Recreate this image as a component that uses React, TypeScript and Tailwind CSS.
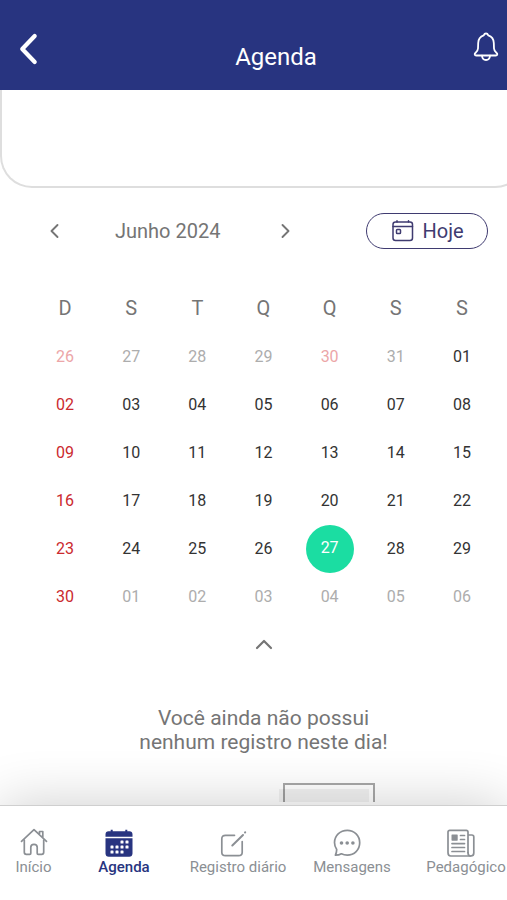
import type { ReactNode } from "react";

type Day = { label: string; kind: "muted" | "mutedRed" | "red" | "normal" | "selected" };

const weekdays = ["D", "S", "T", "Q", "Q", "S", "S"];

const dayStyles: Record<Day["kind"], string> = {
  muted: "text-[#adadad]",
  mutedRed: "text-[#eca6a8]",
  red: "text-[#cb2a2e]",
  normal: "text-[#333333]",
  selected: "bg-[#1bdda2] text-white pb-0.5",
};

const pad = (n: number) => String(n).padStart(2, "0");

const days: Day[] = [
  ...[26, 27, 28, 29, 30, 31].map(
    (n): Day => ({ label: pad(n), kind: n === 26 || n === 30 ? "mutedRed" : "muted" })
  ),
  ...Array.from({ length: 30 }, (_, i): Day => {
    const n = i + 1;
    return { label: pad(n), kind: n === 27 ? "selected" : n % 7 === 2 ? "red" : "normal" };
  }),
  ...[1, 2, 3, 4, 5, 6].map((n): Day => ({ label: pad(n), kind: "muted" })),
];

const weeks = Array.from({ length: 6 }, (_, i) => days.slice(i * 7, i * 7 + 7));

function Chevron({ d, className, width }: { d: string; className: string; width: number }) {
  return (
    <svg
      viewBox="0 0 24 24"
      className={className}
      fill="none"
      stroke="currentColor"
      strokeWidth={width}
      strokeLinecap="round"
      strokeLinejoin="round"
      aria-hidden="true"
    >
      <path d={d} />
    </svg>
  );
}

function BellIcon() {
  return (
    <svg viewBox="0 0 26 30" className="h-[30px] w-[26px]" fill="none" stroke="currentColor" strokeWidth="1.8" strokeLinecap="round" strokeLinejoin="round" aria-hidden="true">
      <path d="M13 1.500c-1.300 0-1.900.9-2.300 1.900C7.500 4.500 5.300 7.300 5.200 11l-.2 5.500c-.1 2-.9 3-2.400 4.200-1.500 1.300-1 2.800.6 2.800h19.600c1.600 0 2.100-1.500.6-2.800-1.500-1.200-2.300-2.200-2.400-4.200l-.2-5.500c-.1-3.700-2.300-6.500-5.500-7.600-.4-1-1-1.900-2.300-1.900Z" />
      <path d="M9 23.700c.2 2.600 1.800 4.300 4 4.300s3.800-1.700 4-4.300" />
    </svg>
  );
}

function TodayIcon() {
  return (
    <svg viewBox="0 0 22 22" className="size-[22px]" fill="none" stroke="currentColor" strokeWidth="1.500" strokeLinecap="round" strokeLinejoin="round" aria-hidden="true">
      <rect x="1" y="2" width="19.500" height="18.500" rx="2.500" />
      <path d="M1 6.500h19.500M5 .8V2M16.500 .8V2" />
      <rect x="4.500" y="9.500" width="4" height="4" rx=".8" />
    </svg>
  );
}

function HomeIcon() {
  return (
    <svg viewBox="0 1 28 28" className="size-7" fill="none" stroke="currentColor" strokeWidth="1.700" strokeLinecap="round" strokeLinejoin="round" aria-hidden="true">
      <path d="M1.500 14.300 14 2.700l12.500 11.600M19.500 7V4.500h3.300v6" />
      <path d="M4.300 13v12.300c0 1.200.8 2 2 2h3.500c.7 0 1-.4 1-1v-6c0-1.700 1.200-3 3.200-3s3.200 1.300 3.200 3v6c0 .6.300 1 1 1h3.500c1.200 0 2-.8 2-2V13" />
    </svg>
  );
}

function AgendaIcon() {
  const dots = [
    [17, 13], [22, 13],
    [7, 18], [12, 18], [17, 18], [22, 18],
    [7, 23], [12, 23], [17, 23],
  ];
  return (
    <svg viewBox="0 0 28 28" className="size-7" aria-hidden="true">
      <path fill="currentColor" d="M3.500 2.300h2.200V.8h2v1.500h12.600V.8h2v1.500h2.200c1.800 0 3 1.200 3 3.200v2.300H.5V5.500c0-2 1.200-3.200 3-3.200ZM.5 9.300h27v15.200c0 2-1.300 3.300-3.300 3.300H3.800c-2 0-3.300-1.300-3.300-3.300V9.300Z" />
      {dots.map(([x, y]) => (
        <rect key={`${x}-${y}`} x={x - 1.5} y={y - 1.5} width="3" height="3" rx=".6" fill="white" />
      ))}
    </svg>
  );
}

function EditIcon() {
  return (
    <svg viewBox="0 0 28 28" className="size-7" fill="none" stroke="currentColor" strokeWidth="1.700" strokeLinecap="round" strokeLinejoin="round" aria-hidden="true">
      <path d="M15.500 6.300h-9c-2.300 0-3.700 1.200-3.700 3.500v13.400c0 2.300 1.400 3.500 3.700 3.500h13c2.300 0 3.700-1.200 3.700-3.500V12.500" />
      <path d="M13.300 16.500 24 6" strokeWidth="2" />
      <path d="m26 3.500.2-.2" strokeWidth="2" />
    </svg>
  );
}

function ChatIcon() {
  return (
    <svg viewBox="0 0 28 28" className="size-7" fill="none" stroke="currentColor" strokeWidth="1.700" strokeLinecap="round" strokeLinejoin="round" aria-hidden="true">
      <path d="M14.300 1.300C7 1.300 1.500 6.700 1.500 13.600c0 2.600.8 5 2.200 7-.1 2.200-.5 3.900-1.300 5.600 2.400 0 4.300-.4 6-1.400 1.800.9 3.700 1.300 5.900 1.300 7 0 12.400-5.400 12.400-12.400S21.300 1.300 14.300 1.300Z" />
      <g fill="currentColor" stroke="none">
        <circle cx="8.500" cy="14" r="1.800" />
        <circle cx="14.200" cy="14" r="1.800" />
        <circle cx="19.900" cy="14" r="1.800" />
      </g>
    </svg>
  );
}

function NewsIcon() {
  return (
    <svg viewBox="0 0 28 28" className="size-7" fill="none" stroke="currentColor" strokeWidth="1.700" strokeLinecap="round" strokeLinejoin="round" aria-hidden="true">
      <path d="M21 23.500V3c0-1-.6-1.700-1.700-1.700H2.700C1.700 1.300 1 2 1 3v20.500C1 25.800 2 27 3.700 27h20.100c1.900 0 3-1.100 3-3V8c0-1.200-.7-2-2-2H21" />
      <path d="M21 23.500c0 2 .8 3.500 2.500 3.500" />
      <path d="M13.500 6.500h4M13.500 10.500h4M5 14.600h12.500M5 18.500h12.500M5 22.500h12.500" />
      <rect x="4.500" y="5.500" width="6.200" height="6.200" rx=".6" fill="currentColor" stroke="none" />
    </svg>
  );
}

function NavItem({ label, icon, active, first }: { label: string; icon: ReactNode; active?: boolean; first?: boolean }) {
  return (
    <a
      href="#"
      aria-current={active ? "page" : undefined}
      className={`flex shrink-0 flex-col items-center ${first ? "w-[67px]" : "w-[114px]"} ${
        active ? "font-medium text-[#283480]" : "text-[#8b8f94]"
      }`}
    >
      <span className={first ? "" : "pt-px pr-2.5"}>{icon}</span>
      <span className={`text-[15px] leading-5 whitespace-nowrap ${first ? "pt-px" : ""}`}>{label}</span>
    </a>
  );
}

export default function App() {
  return (
    <div className="flex min-h-screen flex-col overflow-hidden bg-white font-['Roboto',sans-serif]">
      <header className="flex h-[90px] items-center justify-between bg-[#283480] pr-2 pl-[11px] text-white">
        <button type="button" aria-label="Voltar" className="mt-2 flex size-9 items-center justify-center">
          <Chevron d="m15.800 3.300-8.300 8.700 8.300 8.700" width={2.8} className="size-9" />
        </button>
        <h1 className="mt-6 ml-8 text-2xl leading-8">Agenda</h1>
        <button type="button" aria-label="Notificações" className="mt-1">
          <BellIcon />
        </button>
      </header>

      <main className="flex-1">
        <div className="-mr-5 h-[98px] rounded-b-[32px] border-2 border-t-0 border-[#dedede] bg-white" />

        <div className="flex items-center justify-between pt-[25px] pr-[19px] pl-[43px]">
          <div className="flex items-center gap-12 text-[#757575]">
            <button type="button" aria-label="Mês anterior" className="size-6">
              <Chevron d="m14.500 6-6 6 6 6" width={1.9} className="size-6" />
            </button>
            <h2 className="pr-1 text-xl leading-6">Junho 2024</h2>
            <button type="button" aria-label="Próximo mês" className="size-6">
              <Chevron d="m10.500 6 6 6-6 6" width={1.9} className="size-6" />
            </button>
          </div>
          <button
            type="button"
            className="flex h-9 w-[122px] items-center justify-center gap-2 rounded-full border border-[#3f3b70] pl-0.5 text-xl text-[#3f3b70]"
          >
            <TodayIcon />
            Hoje
          </button>
        </div>

        <div className="flex flex-col items-center pt-[35px] pr-3 pl-8">
          <table className="w-full table-fixed border-collapse text-center">
            <thead>
              <tr>
                {weekdays.map((d, i) => (
                  <th key={i} scope="col" className="h-[49px] p-0 pb-0.5 text-xl font-normal text-[#757575]">
                    {d}
                  </th>
                ))}
              </tr>
            </thead>
            <tbody>
              {weeks.map((week, i) => (
                <tr key={i}>
                  {week.map((day, j) => (
                    <td key={j} className="h-12 p-0">
                      <button
                        type="button"
                        className={`mx-auto flex size-12 items-center justify-center rounded-full text-base ${dayStyles[day.kind]}`}
                      >
                        {day.label}
                      </button>
                    </td>
                  ))}
                </tr>
              ))}
            </tbody>
          </table>

          <button type="button" aria-label="Recolher calendário" className="flex size-12 items-center justify-center text-[#757575]">
            <Chevron d="m5 15 7-7 7 7" width={2.2} className="size-6" />
          </button>

          <p className="mt-[37px] text-center text-[21px] leading-6 text-[#757575]">
            Você ainda não possui
            <br />
            nenhum registro neste dia!
          </p>
          <div className="relative mt-[29px] ml-[130px] h-[19px] w-[92px] border-2 border-b-0 border-[#a8a8a8]">
            <div className="absolute top-1 -left-1.5 h-[13px] w-[90px] bg-black/5" />
          </div>
        </div>
      </main>

      <nav
        aria-label="Principal"
        className="relative flex h-[95px] border-t border-[#cfcfcf] bg-white pt-[22px] shadow-[0_0_56px_rgba(0,0,0,0.2)]"
      >
        <NavItem label="Início" icon={<HomeIcon />} first />
        <NavItem label="Agenda" icon={<AgendaIcon />} active />
        <NavItem label="Registro diário" icon={<EditIcon />} />
        <NavItem label="Mensagens" icon={<ChatIcon />} />
        <NavItem label="Pedagógico" icon={<NewsIcon />} />
      </nav>
    </div>
  );
}
